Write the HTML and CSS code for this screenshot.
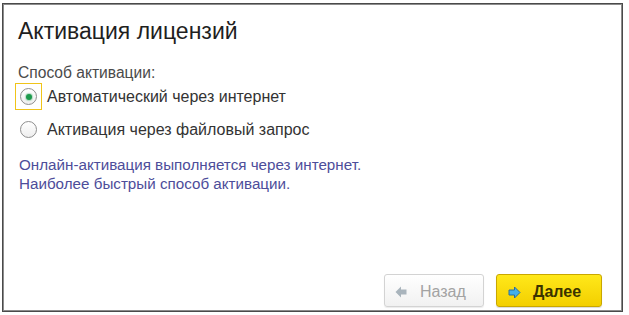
FILE: index.html
```html
<!DOCTYPE html>
<html lang="ru">
<head>
<meta charset="utf-8">
<title>Активация лицензий</title>
<link rel="stylesheet" href="styles.css">
</head>
<body>
<div class="frame">
  <h1 class="title">Активация лицензий</h1>
  <div class="label">Способ активации:</div>
  <div class="radio-row">
    <span class="focus focus-on"><span class="circle"><span class="dot"></span></span></span>
    <span class="radio-text">Автоматический через интернет</span>
  </div>
  <div class="radio-row row-gap">
    <span class="focus"><span class="circle"></span></span>
    <span class="radio-text">Активация через файловый запрос</span>
  </div>
  <div class="hint">
    <div>Онлайн-активация выполняется через интернет.</div>
    <div>Наиболее быстрый способ активации.</div>
  </div>
  <div class="footer">
    <button class="btn btn-back" type="button">
      <svg class="icon" width="12" height="12" viewBox="0 0 12 12"><path d="M0.5 6 L6 0.5 V3.5 H11.5 V8.5 H6 V11.5 Z" fill="#a9b4bc"/></svg>
      <span>Назад</span>
    </button>
    <button class="btn btn-next" type="button">
      <svg class="icon" width="13" height="13" viewBox="0 0 13 13"><path d="M1 4 H6.5 V1 L12 6.5 L6.5 12 V9 H1 Z" fill="#43b0ea" stroke="#2b6e9e" stroke-width="1" stroke-linejoin="round"/></svg>
      <span>Далее</span>
    </button>
  </div>
</div>
</body>
</html>
```
FILE: styles.css
```css
* { box-sizing: border-box; }
html, body { margin: 0; padding: 0; background: #fff; }
body {
  font-family: "Liberation Sans", Arial, sans-serif;
  width: 629px;
  height: 315px;
  overflow: hidden;
}
.frame {
  width: 621px;
  height: 309px;
  margin: 3px 0 0 2px;
  border: 1px solid #4a4a4a;
  box-shadow: inset 0 0 0 1px #8c8c8c;
  padding: 13px 20px 4px 15px;
  display: flex;
  flex-direction: column;
}
.title {
  margin: 0;
  font-size: 23px;
  line-height: 28px;
  font-weight: normal;
  color: #1f1f1f;
}
.label {
  margin-top: 18px;
  font-size: 15.6px;
  line-height: 20px;
  color: #4a4a4a;
}
.radio-row {
  display: flex;
  align-items: center;
  height: 27px;
  margin-left: -3px;
}
.row-gap { margin-top: 6px; }
.focus {
  width: 27px;
  height: 27px;
  border: 1px solid transparent;
  display: flex;
  align-items: center;
  justify-content: center;
}
.focus-on { border-color: #f0c419; }
.circle {
  width: 17px;
  height: 17px;
  border-radius: 50%;
  border: 1px solid #8e8e8e;
  background: linear-gradient(#ffffff, #eeeeee);
  display: flex;
  align-items: center;
  justify-content: center;
}
.dot {
  width: 6px;
  height: 6px;
  border-radius: 50%;
  background: #1c9a4c;
  box-shadow: 0 0 1px 1px rgba(60,170,100,0.35);
}
.radio-text {
  margin-left: 5px;
  font-size: 16px;
  line-height: 20px;
  color: #333;
}
.hint {
  margin-top: 12px;
  padding-left: 1px;
  font-size: 15.2px;
  line-height: 19px;
  color: #4d4d9a;
}
.footer {
  margin-top: auto;
  display: flex;
  justify-content: flex-end;
  gap: 12px;
}
.btn {
  height: 33px;
  display: flex;
  align-items: center;
  padding: 3px 0 0 0;
  border-radius: 3px;
  font-family: "Liberation Sans", Arial, sans-serif;
  font-size: 16px;
  cursor: default;
}
.btn .icon { flex: none; }
.btn-back {
  width: 100px;
  padding-left: 10px;
  gap: 13px;
  background: linear-gradient(#ffffff, #f1f1f1);
  border: 1px solid #d3d3d3;
  box-shadow: 0 1px 1px rgba(0,0,0,0.08);
  color: #a3a3a3;
}
.btn-next {
  width: 106px;
  padding-left: 11px;
  gap: 12px;
  background: linear-gradient(#ffe81a, #f3cf00);
  border: 1px solid #c9a700;
  box-shadow: 0 1px 1px rgba(0,0,0,0.15);
  color: #3a3300;
  font-weight: bold;
  font-size: 16px;
}
```
